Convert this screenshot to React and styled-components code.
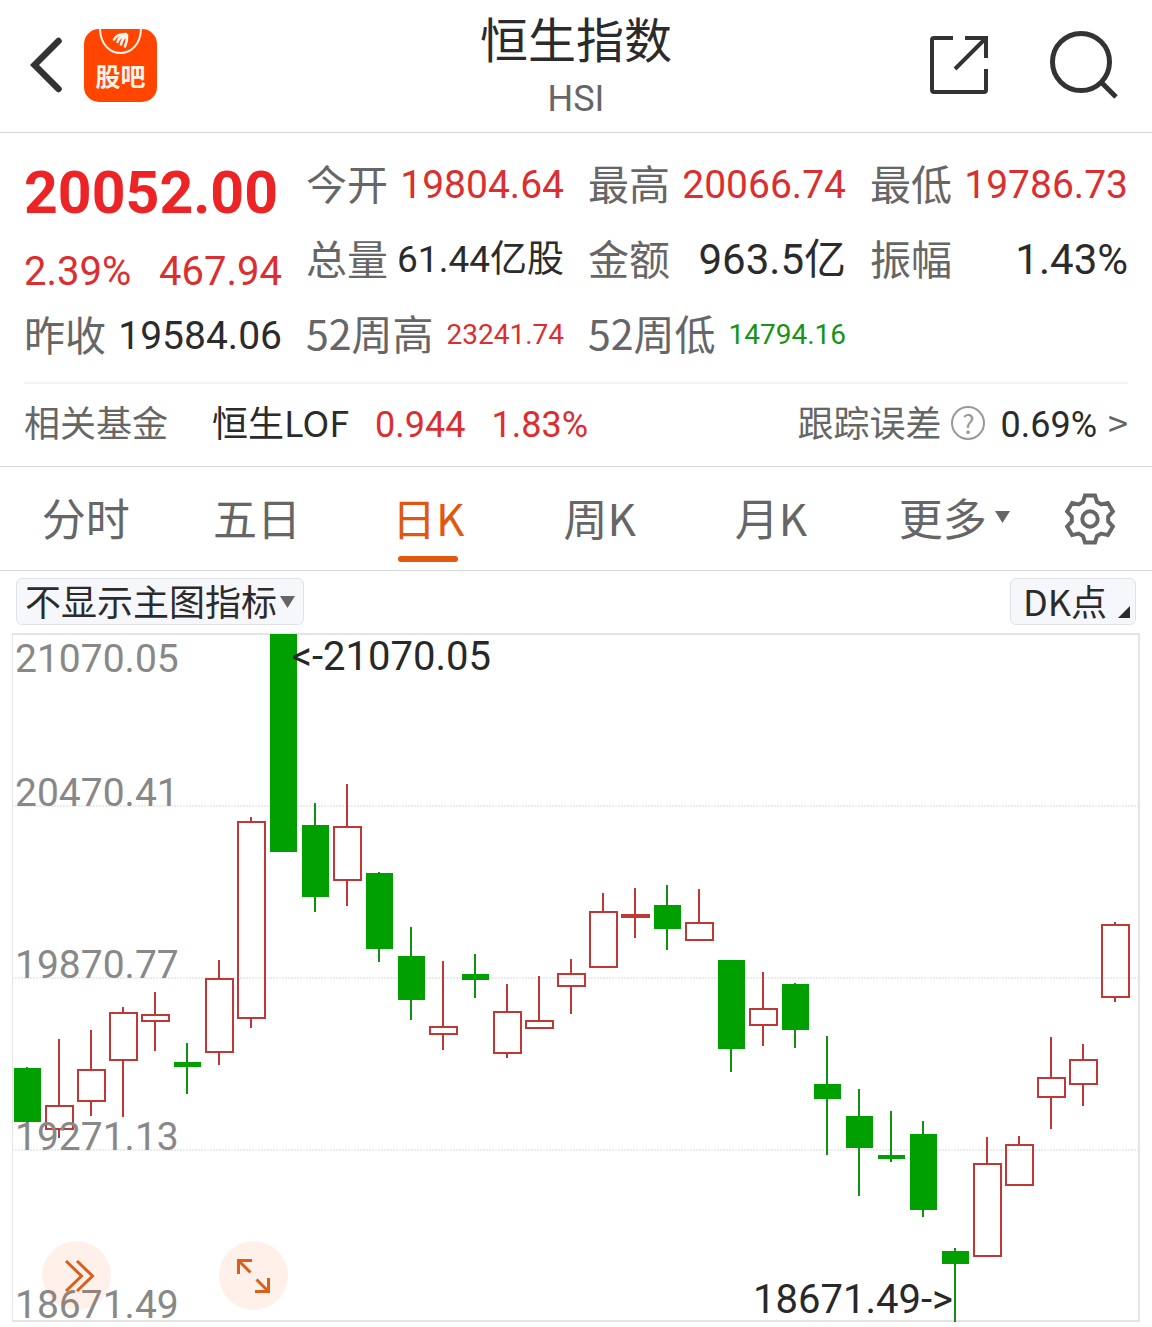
import React from 'react';
import styled, { createGlobalStyle } from 'styled-components';

const GlobalStyle = createGlobalStyle`
  * {
    box-sizing: border-box;
  }

  body {
    margin: 0;
    background: #ffffff;
    color: #2b2b2b;
    font-family: "Noto Sans CJK SC", "Noto Sans", sans-serif;
  }

  button,
  select {
    font-family: inherit;
    color: inherit;
    margin: 0;
  }
`;

const numberFont = 'Roboto, "Noto Sans CJK SC", sans-serif';

const colors = {
  up: '#dc2e2e',
  down: '#159415',
  text: '#2b2b2b',
  label: '#666666',
  accent: '#e0590f',
};

// Header
const Header = styled.header`
  display: grid;
  grid-template-columns: 1fr auto 1fr;
  align-items: center;
  padding: 0 30px;
  border-bottom: 1px solid #d8d8d8;
`;

const HeaderSide = styled.div`
  display: flex;
  align-items: center;
  justify-content: ${({ $end }) => ($end ? 'flex-end' : 'flex-start')};
  gap: ${({ $end }) => ($end ? '62px' : '20px')};
  padding-bottom: 2px;
`;

const IconButton = styled.button`
  display: flex;
  align-items: center;
  justify-content: center;
  border: none;
  background: none;
  padding: 0;
  cursor: pointer;
`;

const Logo = styled.a`
  display: flex;
  flex-direction: column;
  align-items: center;
  width: 73px;
  height: 73px;
  border-radius: 15px;
  background: #ff4500;
  color: #fff3ea;
  text-decoration: none;
  overflow: hidden;
`;

const LogoText = styled.span`
  font-size: 25px;
  font-weight: 700;
  line-height: 36px;
`;

const TitleBlock = styled.div`
  display: flex;
  flex-direction: column;
  align-items: center;
  padding: 7px 0 5px;
`;

const Title = styled.h1`
  margin: 0;
  font-size: 48px;
  font-weight: 400;
  line-height: 60px;
`;

const Subtitle = styled.span`
  padding-top: 4px;
  font-family: ${numberFont};
  font-size: 36px;
  line-height: 56px;
  color: ${colors.label};
`;

// Quote figures
const Quote = styled.section`
  display: grid;
  grid-template-columns: repeat(4, 1fr);
  grid-auto-rows: 75px;
  column-gap: 24px;
  margin: 0 24px;
  padding: 11px 0 13px;
  border-bottom: 2px solid #f4f4f4;
`;

const PriceColumn = styled.div`
  grid-row: span 3;
  display: flex;
  flex-direction: column;
  padding-top: 7px;
`;

const Price = styled.strong`
  font-family: ${numberFont};
  font-size: 59px;
  font-weight: 700;
  line-height: 84px;
  color: #ec2426;
`;

const Change = styled.div`
  display: flex;
  justify-content: space-between;
  font-family: ${numberFont};
  font-size: 40px;
  line-height: 62px;
  padding-top: 6px;
  color: ${colors.up};
`;

const Figure = styled.div`
  display: flex;
  align-items: center;
  justify-content: space-between;
  white-space: nowrap;
  line-height: 54px;
`;

const FigureLabel = styled.span`
  font-size: 41px;
  color: ${colors.label};
`;

const FigureValue = styled.span`
  padding-top: 6px;
  font-family: ${numberFont};
  font-size: ${({ $size }) => $size || 39}px;
  color: ${({ $tone }) => colors[$tone] || colors.text};
`;

// Related fund
const FundRow = styled.section`
  display: flex;
  align-items: center;
  justify-content: space-between;
  height: 82px;
  padding: 0 24px 8px;
  font-size: 36px;
  white-space: nowrap;
`;

const FundGroup = styled.div`
  display: flex;
  align-items: center;
  gap: ${({ $gap }) => $gap}px;
  color: ${colors.label};
`;

const FundLink = styled.a`
  display: flex;
  align-items: baseline;
  gap: 26px;
  margin-left: 20px;
  color: ${colors.text};
  text-decoration: none;
`;

const Rise = styled.span`
  font-family: ${numberFont};
  color: ${colors.up};
`;

const HelpButton = styled.button`
  width: 34px;
  height: 34px;
  margin-top: 4px;
  padding: 0;
  border: 2px solid #999999;
  border-radius: 50%;
  background: none;
  color: #999999;
  font-size: 26px;
  line-height: 28px;
  cursor: pointer;
`;

const ErrorLink = styled.a`
  display: flex;
  align-items: baseline;
  gap: 11px;
  margin-left: 5px;
  color: ${colors.text};
  text-decoration: none;
`;

const ErrorValue = styled.span`
  font-family: ${numberFont};
`;

const ErrorArrow = styled.span`
  color: ${colors.label};
`;

// Period tabs
const Tabs = styled.nav`
  display: flex;
  height: 105px;
  border-top: 1px solid #d8d8d8;
  border-bottom: 1px solid #d8d8d8;
`;

const Tab = styled.button`
  flex: 1;
  display: flex;
  flex-direction: column;
  align-items: center;
  justify-content: flex-end;
  padding: 0 0 8px;
  border: none;
  background: none;
  font-size: 44px;
  line-height: 64px;
  white-space: nowrap;
  color: ${({ $active }) => ($active ? colors.accent : colors.label)};
  cursor: pointer;

  &::after {
    content: '';
    width: 60px;
    height: 6px;
    margin-top: 7px;
    border-radius: 3px;
    background: ${({ $active }) => ($active ? colors.accent : 'transparent')};
  }
`;

const MoreLabel = styled.span`
  display: flex;
  align-items: center;
  gap: 8px;
  padding-left: 24px;
`;

const SettingsButton = styled(IconButton)`
  width: 124px;
`;

// Chart toolbar
const Toolbar = styled.div`
  display: flex;
  justify-content: space-between;
  padding: 7px 16px 8px;
`;

const Pill = styled.div`
  display: flex;
  align-items: center;
  height: 47px;
  border: 1px solid #dfe2e6;
  border-radius: 6px;
  background: #f6f7fa;
`;

const IndicatorSelect = styled.select`
  appearance: none;
  height: 45px;
  padding: 0 2px 4px 8px;
  border: none;
  background: none;
  font-size: 36px;
  line-height: 40px;
`;

const PillArrow = styled.span`
  display: flex;
  padding-right: 8px;
`;

const PointButton = styled(Pill).attrs({ as: 'button' })`
  gap: 11px;
  padding: 0 5px 0 12px;
  font-size: 36px;
  line-height: 40px;
  cursor: pointer;

  span {
    padding-bottom: 4px;
  }

  svg {
    align-self: flex-end;
    margin-bottom: 6px;
  }
`;

// Chart
const ChartArea = styled.section`
  position: relative;
  margin: 0 12px;

  > svg {
    display: block;
    width: 100%;
    height: auto;
    overflow: visible;
    font-family: ${numberFont};
  }
`;

const RoundButton = styled(IconButton)`
  position: absolute;
  left: ${({ $left }) => $left}px;
  bottom: 12px;
  width: 69px;
  height: 69px;
  border-radius: 50%;
  background: rgba(255, 95, 20, 0.09);
`;

const figures = [
  { label: '今开', value: '19804.64', tone: 'up' },
  { label: '最高', value: '20066.74', tone: 'up' },
  { label: '最低', value: '19786.73', tone: 'up' },
  { label: '总量', value: '61.44亿股', size: 37 },
  { label: '金额', value: '963.5亿', size: 42 },
  { label: '振幅', value: '1.43%', size: 42 },
  { label: '52周高', value: '23241.74', tone: 'up', size: 28 },
  { label: '52周低', value: '14794.16', tone: 'down', size: 28 },
];

const tabs = ['分时', '五日', '日K', '周K', '月K'];

const axis = [
  { label: '21070.05', y: 39 },
  { label: '20470.41', y: 173, line: true },
  { label: '19870.77', y: 345, line: true },
  { label: '19271.13', y: 517, line: true },
  { label: '18671.49', y: 685 },
];

// [rising, high, body top, body bottom, low] in plot units
const candles = [
  [0, 434, 435, 489, 505],
  [1, 406, 472, 497, 505],
  [1, 397, 436, 469, 483],
  [1, 374, 379, 428, 484],
  [1, 359, 381, 389, 418],
  [0, 410, 429, 434, 461],
  [1, 327, 345, 420, 432],
  [1, 184, 188, 386, 395],
  [0, 1, 1, 219, 219],
  [0, 170, 192, 264, 279],
  [1, 151, 193, 248, 273],
  [0, 239, 240, 316, 329],
  [0, 294, 323, 367, 387],
  [1, 328, 393, 402, 417],
  [0, 321, 341, 347, 365],
  [1, 351, 378, 421, 425],
  [1, 343, 387, 396, 396],
  [1, 326, 340, 354, 381],
  [1, 260, 278, 335, 335],
  [1, 255, 281, 285, 305],
  [0, 252, 272, 296, 317],
  [1, 256, 289, 308, 308],
  [0, 327, 327, 416, 439],
  [1, 339, 375, 393, 413],
  [0, 350, 351, 397, 415],
  [0, 403, 451, 466, 522],
  [0, 456, 483, 515, 563],
  [0, 478, 522, 526, 529],
  [0, 488, 501, 577, 584],
  [0, 615, 618, 631, 689],
  [1, 504, 530, 624, 624],
  [1, 503, 511, 553, 553],
  [1, 404, 444, 465, 496],
  [1, 411, 426, 452, 473],
  [1, 289, 291, 365, 369],
];

const BackIcon = () => (
  <svg width="34" height="60" viewBox="0 0 34 60" fill="none">
    <path d="M28.5 6 L4.5 30 L28.5 54" stroke="#333333" strokeWidth="6.5" strokeLinecap="round" />
  </svg>
);

const LogoMark = () => (
  <svg width="73" height="28" viewBox="0 0 73 28" fill="none" stroke="#fff3ea">
    <path d="M16 0 C17 32 56 32 57 0" strokeWidth="2" />
    <path
      d="M41 5 Q33 5 30 10.5 M42 5 Q35 8 33.5 13 M42.5 6 Q38 10 37 15.5 M43 6 Q43.5 12 41 17.5"
      strokeWidth="2.6"
      strokeLinecap="round"
    />
  </svg>
);

const ShareIcon = () => (
  <svg width="58" height="58" viewBox="0 0 58 58" fill="none" stroke="#333333" strokeWidth="4">
    <path d="M23 2 H4 Q2 2 2 4 V54 Q2 56 4 56 H54 Q56 56 56 54 V33" />
    <path d="M35 2 H56 V22 M25 33 L56 2" />
  </svg>
);

const SearchIcon = () => (
  <svg width="72" height="68" viewBox="0 0 72 68" fill="none" stroke="#333333" strokeWidth="5">
    <circle cx="31" cy="31" r="28.5" />
    <path d="M51 51 L66 66" />
  </svg>
);

const toothPoints = [[-7, -17], [-5, -23.5], [5, -23.5], [7, -17]];

const gearPoints = [0, 60, 120, 180, 240, 300]
  .flatMap((deg) => {
    const a = (deg * Math.PI) / 180;
    return toothPoints.map(([x, y]) => [
      (x * Math.cos(a) - y * Math.sin(a)).toFixed(2),
      (x * Math.sin(a) + y * Math.cos(a)).toFixed(2),
    ]);
  })
  .join(' ');

const GearIcon = () => (
  <svg width="52" height="52" viewBox="-26 -26 52 52" fill="none" stroke="#666666" strokeWidth="4">
    <polygon points={gearPoints} />
    <circle r="7.7" />
  </svg>
);

const DownTriangle = () => (
  <svg width="15" height="12" viewBox="0 0 15 12">
    <path d="M0 0 H15 L7.5 12 Z" fill="#666666" />
  </svg>
);

const CornerTriangle = () => (
  <svg width="12" height="12" viewBox="0 0 12 12">
    <path d="M12 0 V12 H0 Z" fill="#2b2b2b" />
  </svg>
);

const Candle = ({ index, data }) => {
  const [rising, high, top, bottom, low] = data;
  const x = index * 32;
  if (!rising) {
    return (
      <g fill="#00a000">
        <rect x={x + 14} y={high} width="2" height={low - high} fill="#109210" />
        <rect x={x + 2} y={top} width="27" height={bottom - top} />
      </g>
    );
  }
  return (
    <g fill="#c03836">
      <rect x={x + 14} y={high} width="2" height={top - high} />
      <rect x={x + 14} y={bottom} width="2" height={low - bottom} />
      <rect x={x + 2} y={top + 1} width="27" height={bottom - top - 2} fill="none" stroke="#c03836" strokeWidth="2" />
    </g>
  );
};

const CandleChart = () => (
  <svg viewBox="0 0 1128 689" role="img" aria-label="恒生指数 日K">
    <path d="M0 1 H1127 M0 688 H1127 M1127 0 V689" stroke="#e4e4e4" strokeWidth="2" />
    <path d="M0.5 0 V689" stroke="#e4e4e4" />
    {axis.filter((a) => a.line).map((a) => (
      <path key={a.label} d={`M0 ${a.y} H1126`} stroke="#ebebeb" strokeWidth="2" strokeDasharray="2 1" />
    ))}
    {candles.map((c, i) => (
      <Candle key={i} index={i} data={c} />
    ))}
    <g fontSize="39" fill="#888888">
      {axis.map((a) => (
        <text key={a.label} x="3" y={a.y}>{a.label}</text>
      ))}
    </g>
    <g fontSize="40" fill="#282828" textAnchor="end">
      <text x="479" y="37">&lt;-21070.05</text>
      <text x="941" y="680">18671.49-&gt;</text>
    </g>
  </svg>
);

const App = () => {
  return (
    <>
      <GlobalStyle />
      <Header>
        <HeaderSide>
          <IconButton aria-label="返回"><BackIcon /></IconButton>
          <Logo href="#guba">
            <LogoMark />
            <LogoText>股吧</LogoText>
          </Logo>
        </HeaderSide>
        <TitleBlock>
          <Title>恒生指数</Title>
          <Subtitle>HSI</Subtitle>
        </TitleBlock>
        <HeaderSide $end>
          <IconButton aria-label="分享"><ShareIcon /></IconButton>
          <IconButton aria-label="搜索"><SearchIcon /></IconButton>
        </HeaderSide>
      </Header>

      <main>
        <Quote>
          <PriceColumn>
            <Price>20052.00</Price>
            <Change>
              <span>2.39%</span>
              <span>467.94</span>
            </Change>
            <Figure>
              <FigureLabel>昨收</FigureLabel>
              <FigureValue>19584.06</FigureValue>
            </Figure>
          </PriceColumn>
          {figures.map((f) => (
            <Figure key={f.label}>
              <FigureLabel>{f.label}</FigureLabel>
              <FigureValue $tone={f.tone} $size={f.size}>{f.value}</FigureValue>
            </Figure>
          ))}
        </Quote>

        <FundRow>
          <FundGroup $gap={24}>
            <span>相关基金</span>
            <FundLink href="#fund">
              恒生LOF
              <Rise>0.944</Rise>
              <Rise>1.83%</Rise>
            </FundLink>
          </FundGroup>
          <FundGroup $gap={10}>
            <span>跟踪误差</span>
            <HelpButton aria-label="跟踪误差说明">?</HelpButton>
            <ErrorLink href="#tracking">
              <ErrorValue>0.69%</ErrorValue>
              <ErrorArrow>&gt;</ErrorArrow>
            </ErrorLink>
          </FundGroup>
        </FundRow>

        <Tabs>
          {tabs.map((t) => (
            <Tab key={t} $active={t === '日K'}>{t}</Tab>
          ))}
          <Tab>
            <MoreLabel>更多 <DownTriangle /></MoreLabel>
          </Tab>
          <SettingsButton aria-label="设置"><GearIcon /></SettingsButton>
        </Tabs>

        <Toolbar>
          <Pill>
            <IndicatorSelect aria-label="主图指标">
              <option>不显示主图指标</option>
            </IndicatorSelect>
            <PillArrow><DownTriangle /></PillArrow>
          </Pill>
          <PointButton>
            <span>DK点</span>
            <CornerTriangle />
          </PointButton>
        </Toolbar>

        <ChartArea>
          <CandleChart />
          <RoundButton $left={30} aria-label="展开">
            <svg width="69" height="69" viewBox="0 0 69 69" fill="none" stroke="#d95f1a" strokeWidth="3">
              <path d="M24 20 L39.5 35 L24 50 M35 20 L50.5 35 L35 50" />
            </svg>
          </RoundButton>
          <RoundButton $left={207} aria-label="全屏">
            <svg width="69" height="69" viewBox="0 0 69 69" fill="none" stroke="#d95f1a" strokeWidth="3">
              <path d="M33 19.5 H19.5 V33 M19.5 19.5 L31.5 31.5" />
              <path d="M36 50.5 H49.5 V37 M49.5 50.5 L37.5 38.5" />
            </svg>
          </RoundButton>
        </ChartArea>
      </main>
    </>
  );
};

export default App;
